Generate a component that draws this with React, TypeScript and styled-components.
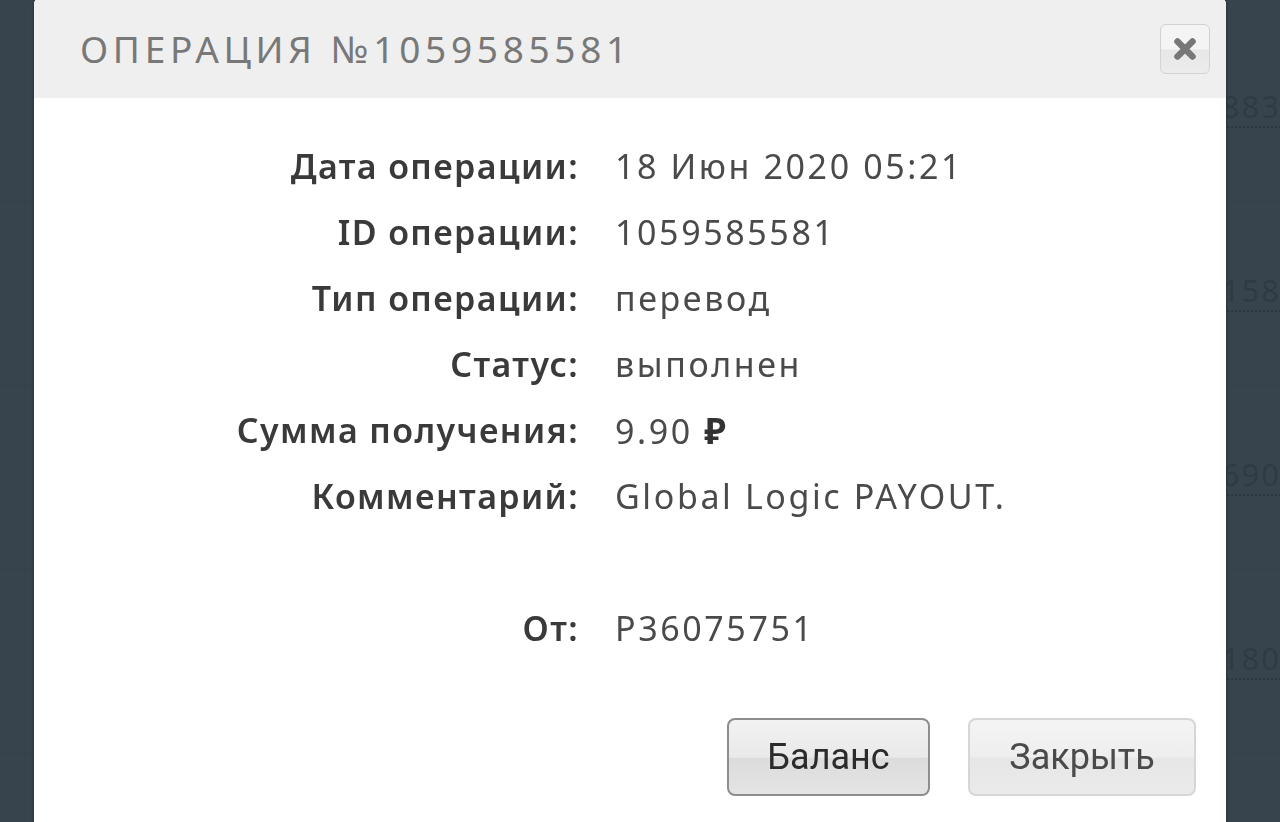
import styled, { createGlobalStyle } from 'styled-components';
import { FC, Fragment } from 'react';

const GlobalStyle = createGlobalStyle`
  html, body {
    margin: 0;
    padding: 0;
    background: #37444d;
    overflow: hidden;
  }
`;

const Page = styled.div`
  width: 1280px;
  height: 822px;
  background: #37444d;
  display: flex;
  flex-direction: column;
  padding-top: 18px;
  box-sizing: border-box;
`;

const BgRow = styled.div`
  height: 184px;
  display: flex;
  justify-content: flex-end;
  align-items: flex-start;
  padding-top: 68px;
  box-sizing: border-box;
  border-bottom: 1px solid #34414a;
`;

const BgAmount = styled.span`
  font-family: 'Noto Sans', sans-serif;
  font-size: 31px;
  letter-spacing: 2px;
  color: #2f3b43;
  white-space: nowrap;
  margin-right: -1px;
  border-bottom: 2px dotted #2c373f;
  line-height: 40px;
`;

const Modal = styled.div`
  position: fixed;
  left: 34px;
  top: -2px;
  width: 1192px;
  height: 840px;
  background: #fff;
  border-radius: 6px;
  box-shadow: 0 0 3px rgba(0, 0, 0, 0.45);
  display: flex;
  flex-direction: column;
  overflow: hidden;
`;

const Header = styled.div`
  height: 100px;
  flex: none;
  background: #efefef;
  display: flex;
  align-items: center;
  justify-content: space-between;
  padding: 0 16px 0 46px;
  box-sizing: border-box;
`;

const Title = styled.h1`
  margin: 0;
  font-family: 'Noto Sans', sans-serif;
  font-weight: 400;
  font-size: 37px;
  letter-spacing: 4.7px;
  color: #787878;
`;

const CloseBox = styled.button`
  width: 50px;
  height: 50px;
  margin-top: 2px;
  border: 1px solid #d2d2d2;
  border-radius: 6px;
  background: linear-gradient(#f4f4f4 0%, #f4f4f4 50%, #e7e7e7 52%, #ececec 100%);
  display: flex;
  align-items: center;
  justify-content: center;
  padding: 0;
`;

const Body = styled.div`
  display: flex;
  flex-direction: column;
  padding: 35px 30px 0 0;
`;

const Details = styled.div`
  display: grid;
  grid-template-columns: 545px 1fr;
  column-gap: 36px;
  grid-auto-rows: 66px;
  align-items: center;
`;

const Label = styled.div`
  font-family: 'Noto Sans', sans-serif;
  font-weight: 600;
  font-size: 34px;
  letter-spacing: 1.4px;
  color: #3a3a3a;
  text-align: right;
  white-space: nowrap;
`;

const Value = styled.div`
  font-family: 'Noto Sans', sans-serif;
  font-weight: 400;
  font-size: 34px;
  letter-spacing: 2.6px;
  color: #4a4a4a;
  white-space: nowrap;
`;

const Rouble = styled.span`
  font-weight: 700;
  font-size: 36px;
  color: #333;
`;

const Actions = styled.div`
  display: flex;
  justify-content: flex-end;
  gap: 38px;
  margin-top: 57px;
`;

const Button = styled.button<{ primary?: boolean }>`
  height: 78px;
  width: ${p => (p.primary ? '203px' : '228px')};
  border-radius: 8px;
  border: ${p => (p.primary ? '2px solid #8d8d8d' : '2px solid #d6d6d6')};
  background: ${p =>
    p.primary
      ? 'linear-gradient(#f2f2f2 0%, #e9e9e9 50%, #dcdcdc 52%, #e4e4e4 100%)'
      : 'linear-gradient(#f4f4f4 0%, #eeeeee 50%, #e6e6e6 52%, #ebebeb 100%)'};
  font-family: Roboto, 'Noto Sans', sans-serif;
  font-size: 36px;
  color: ${p => (p.primary ? '#2b2b2b' : '#4a4a4a')};
  padding: 0;
  box-sizing: border-box;
`;

const rows: [string, string][] = [
  ['Дата операции:', '18 Июн 2020 05:21'],
  ['ID операции:', '1059585581'],
  ['Тип операции:', 'перевод'],
  ['Статус:', 'выполнен']
];

const background = ['1883', '1158', '2690', '1180'];

const App: FC = () => (
  <>
    <GlobalStyle />
    <Page>
      {background.map(v => (
        <BgRow key={v}>
          <BgAmount>{v}</BgAmount>
        </BgRow>
      ))}
    </Page>
    <Modal>
      <Header>
        <Title>ОПЕРАЦИЯ №1059585581</Title>
        <CloseBox aria-label="close">
          <svg width="24" height="24" viewBox="0 0 24 24">
            <path d="M4.5 4.5 L19.5 19.5 M19.5 4.5 L4.5 19.5" stroke="#777" strokeWidth="6.5" strokeLinecap="round" />
          </svg>
        </CloseBox>
      </Header>
      <Body>
        <Details>
          {rows.map(([label, value]) => (
            <Fragment key={label}>
              <Label>{label}</Label>
              <Value>{value}</Value>
            </Fragment>
          ))}
          <Label>Сумма получения:</Label>
          <Value>
            9.90 <Rouble>₽</Rouble>
          </Value>
          <Label>Комментарий:</Label>
          <Value>Global Logic PAYOUT.</Value>
          <div />
          <div />
          <Label>От:</Label>
          <Value>P36075751</Value>
        </Details>
        <Actions>
          <Button primary>Баланс</Button>
          <Button>Закрыть</Button>
        </Actions>
      </Body>
    </Modal>
  </>
);

export default App;
